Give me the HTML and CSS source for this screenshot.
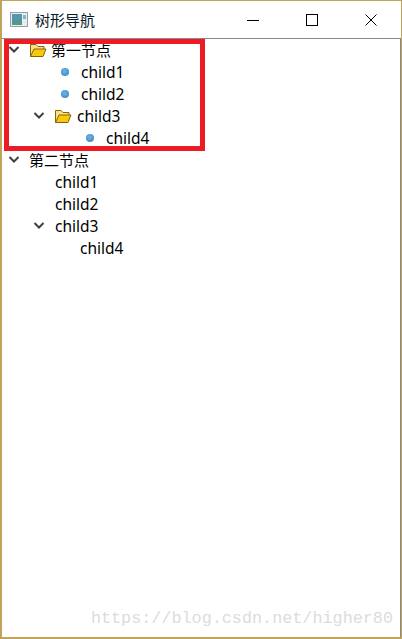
FILE: index.html
```html
<!DOCTYPE html>
<html lang="en">
<head>
    <meta charset="UTF-8">
    <meta name="viewport" content="width=device-width, initial-scale=1.0">
    <title>树形导航</title>
    <link rel="stylesheet" href="styles.css">
</head>
<body>
<div class="window">
    <!-- Title bar -->
    <div class="titlebar">
        <svg class="app-icon" width="18" height="15" viewBox="0 0 18 15">
            <rect x="0.5" y="0.5" width="17" height="14" fill="#e8eef0" stroke="#9a9fa3"/>
            <rect x="2" y="2" width="10" height="11" fill="#4f9a8c"/>
            <rect x="2" y="2" width="10" height="5" fill="#5b93b5"/>
            <rect x="13" y="3" width="3" height="4" fill="#7fbfb0"/>
        </svg>
        <span class="title">树形导航</span>
        <div class="win-buttons">
            <div class="win-btn">
                <svg width="12" height="12" viewBox="0 0 12 12"><path d="M0 6.5H12" stroke="#000"/></svg>
            </div>
            <div class="win-btn">
                <svg width="12" height="12" viewBox="0 0 12 12"><rect x="0.5" y="0.5" width="11" height="11" fill="none" stroke="#000"/></svg>
            </div>
            <div class="win-btn">
                <svg width="12" height="12" viewBox="0 0 12 12"><path d="M0.5 0.5L11.5 11.5M11.5 0.5L0.5 11.5" stroke="#000"/></svg>
            </div>
        </div>
    </div>

    <!-- Tree -->
    <div class="tree">
        <div class="row">
            <svg class="arrow" width="25" height="22" viewBox="0 0 25 22"><path d="M4.5 8L9 12.5L13.5 8" fill="none" stroke="#404040" stroke-width="2"/></svg>
            <svg class="folder" width="22" height="22" viewBox="0 0 22 22"><path d="M0.5 17.5V5.5H6L8 7.5H14V10" fill="#f7e08a" stroke="#8a6400"/><path d="M0.5 17.5L4 10H16L13 17.5Z" fill="#f8c810" stroke="#8a6400"/></svg>
            <span class="cjk">第一节点</span>
        </div>
        <div class="row depth-1">
            <span class="bullet"></span>
            <span>child1</span>
        </div>
        <div class="row depth-1">
            <span class="bullet"></span>
            <span>child2</span>
        </div>
        <div class="row depth-1">
            <svg class="arrow" width="25" height="22" viewBox="0 0 25 22"><path d="M4.5 8L9 12.5L13.5 8" fill="none" stroke="#404040" stroke-width="2"/></svg>
            <svg class="folder" width="22" height="22" viewBox="0 0 22 22"><path d="M0.5 17.5V5.5H6L8 7.5H14V10" fill="#f7e08a" stroke="#8a6400"/><path d="M0.5 17.5L4 10H16L13 17.5Z" fill="#f8c810" stroke="#8a6400"/></svg>
            <span>child3</span>
        </div>
        <div class="row depth-2">
            <span class="bullet"></span>
            <span>child4</span>
        </div>

        <div class="row">
            <svg class="arrow" width="25" height="22" viewBox="0 0 25 22"><path d="M4.5 8L9 12.5L13.5 8" fill="none" stroke="#404040" stroke-width="2"/></svg>
            <span class="cjk">第二节点</span>
        </div>
        <div class="row leaf">child1</div>
        <div class="row leaf">child2</div>
        <div class="row depth-1">
            <svg class="arrow" width="25" height="22" viewBox="0 0 25 22"><path d="M4.5 8L9 12.5L13.5 8" fill="none" stroke="#404040" stroke-width="2"/></svg>
            <span>child3</span>
        </div>
        <div class="row leaf depth-2">child4</div>
    </div>

    <!-- Red marker drawn over the screenshot -->
    <div class="marker"></div>
    <div class="watermark">https://blog.csdn.net/higher80</div>
</div>
</body>
</html>
```

FILE: styles.css
```css
* {
    box-sizing: border-box;
    margin: 0;
    padding: 0;
}

html, body {
    height: 100%;
    overflow: hidden;
}

body {
    font-family: "Noto Sans", "Noto Sans CJK SC", sans-serif;
    font-size: 15.5px;
    color: #000;
    background: #fff;
}

.window {
    position: relative;
    height: 100%;
    display: flex;
    flex-direction: column;
    border: 1px solid #c0a45c;
    border-left-width: 2px;
    border-bottom-width: 2px;
}

.titlebar {
    height: 37px;
    display: flex;
    align-items: center;
    padding-left: 8px;
    background: #fff;
    flex-shrink: 0;
}

.app-icon {
    margin-right: 7px;
}

.title {
    font-size: 15px;
    color: #0b1a2a;
}

.win-buttons {
    margin-left: auto;
    padding-right: 1px;
    display: flex;
}

.win-btn {
    width: 59px;
    height: 37px;
    display: flex;
    align-items: center;
    justify-content: center;
}

.tree {
    flex: 1;
    padding-left: 3px;
    border-top: 1px solid #868a8e;
    border-right: 1px solid #868a8e;
}

.row {
    height: 22px;
    display: flex;
    align-items: center;
    white-space: nowrap;
    line-height: 20px;
    padding-bottom: 1px;
}

.depth-1 {
    padding-left: 25px;
}

.depth-2 {
    padding-left: 50px;
}

.arrow, .folder {
    flex-shrink: 0;
    margin-bottom: -1px;
}

.cjk {
    font-size: 15px;
    margin-left: -1px;
}

.row.leaf {
    padding-left: 50px;
}

.row.leaf.depth-2 {
    padding-left: 75px;
}

.bullet {
    width: 8px;
    height: 8px;
    margin: 0 12px 0 31px;
    border-radius: 50%;
    background: radial-gradient(circle at 45% 40%, #6db4ea, #2f7fc0);
    flex-shrink: 0;
}

.marker {
    position: absolute;
    left: 2px;
    top: 38px;
    width: 201px;
    height: 112px;
    border: 5px solid #ed1c24;
}

.watermark {
    position: absolute;
    right: 8px;
    bottom: 9px;
    font-family: "Liberation Mono", monospace;
    font-size: 16.8px;
    color: #dcdcdc;
}
```
